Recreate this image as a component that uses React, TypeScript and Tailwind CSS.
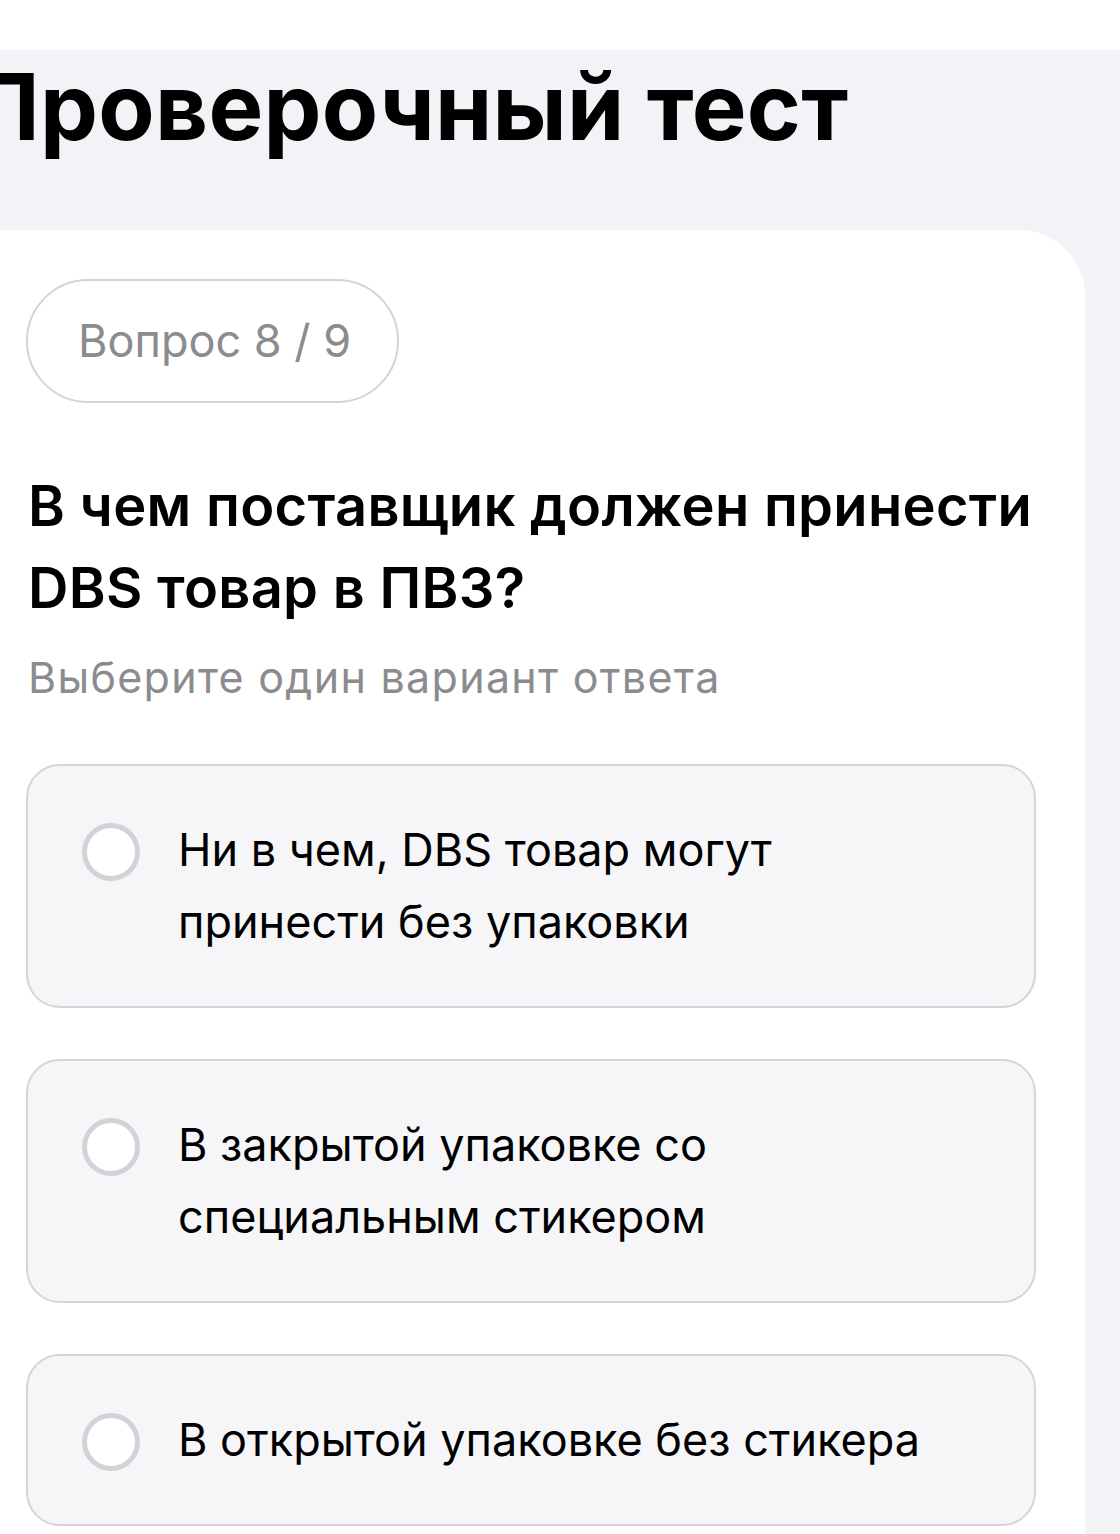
import React from 'react';

const options = [
  'Ни в чем, DBS товар могут принести без упаковки',
  'В закрытой упаковке со специальным стикером',
  'В открытой упаковке без стикера',
];

const App: React.FC = () => {
  return (
    <div className="min-h-[1534px] bg-white font-['Inter','Noto_Sans',sans-serif] overflow-hidden">
      <div className="h-[50px] bg-white" />
      <div className="bg-[#f2f3f7] min-h-[1484px]">
        <h1 className="ml-[-29px] pt-[10px] text-[92px] leading-[94px] font-bold tracking-[0.3px] text-black whitespace-nowrap">
          Проверочный тест
        </h1>

        <div className="mt-[76px] mr-[35px] bg-white rounded-tr-[66px] pl-[26px] pr-[49px] pt-[49px] pb-[40px]">
          <div className="inline-flex items-center h-[124px] pl-[50px] pr-[46px] rounded-full border-2 border-[#d3d3d9] text-[45px] text-[#8b8b90]">
            Вопрос 8 / 9
          </div>

          <h2 className="mt-[62px] pl-[2px] mr-[-30px] text-[56px] leading-[82px] font-semibold text-black tracking-[0.3px]">
            В чем поставщик должен принести DBS товар в ПВЗ?
          </h2>

          <p className="mt-[20px] pl-[2px] text-[43px] leading-[56px] text-[#8b8b90] tracking-[1.3px]">
            Выберите один вариант ответа
          </p>

          <div className="mt-[59px] flex flex-col gap-[51px]">
            {options.map((text) => (
              <div
                key={text}
                className="flex items-start gap-[38px] rounded-[34px] border-2 border-[#d4d4da] bg-[#f6f6f8] pl-[54px] pr-[60px] py-[48px]"
              >
                <div className="mt-[9px] w-[58px] h-[58px] shrink-0 rounded-full border-[5px] border-[#d2d2d9] bg-white" />
                <span className="text-[45px] leading-[72px] text-black max-w-[765px]">
                  {text}
                </span>
              </div>
            ))}
          </div>
        </div>
      </div>
    </div>
  );
};

export default App;
